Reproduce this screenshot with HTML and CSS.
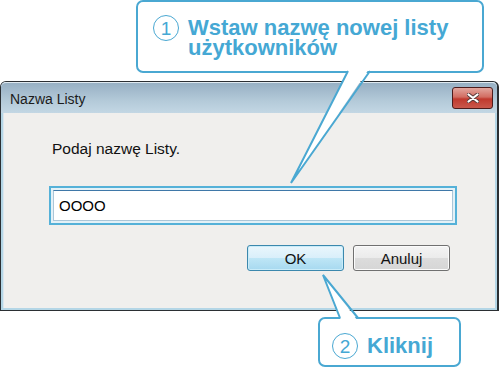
FILE: index.html
```html
<!DOCTYPE html>
<html lang="pl">
<head>
  <meta charset="UTF-8" />
  <title>Nazwa Listy</title>
  <link rel="stylesheet" href="styles.css">
</head>
<body>
  <div class="page">
    <div class="callout callout-top">
      <span class="step">1</span>
      <p class="callout-text">Wstaw nazwę nowej listy<br>użytkowników</p>
    </div>

    <div class="dialog">
      <div class="titlebar">
        <span class="title">Nazwa Listy</span>
        <div class="close-btn">
          <svg width="12" height="10" viewBox="0 0 12 10">
            <path d="M1.5 1.5 L10.5 8.5 M10.5 1.5 L1.5 8.5" stroke="#5a3a3a" stroke-width="4" stroke-linecap="round"/>
            <path d="M1.5 1.5 L10.5 8.5 M10.5 1.5 L1.5 8.5" stroke="#fff" stroke-width="2.2" stroke-linecap="round"/>
          </svg>
        </div>
      </div>
      <div class="client">
        <p class="prompt">Podaj nazwę Listy.</p>
        <div class="field-highlight">
          <div class="field">OOOO</div>
        </div>
        <div class="buttons">
          <button class="btn btn-default">OK</button>
          <button class="btn">Anuluj</button>
        </div>
      </div>
    </div>

    <div class="callout callout-bottom">
      <span class="step">2</span>
      <p class="callout-text">Kliknij</p>
    </div>

    <!-- callout pointers drawn over the dialog -->
    <svg class="tails" width="500" height="368" viewBox="0 0 500 368">
      <polygon points="349,69 369,69 291,183" fill="#fff"/>
      <polyline points="348,71 291,183 370,71" fill="none" stroke="#4aa8d2" stroke-width="2" stroke-linejoin="miter"/>
      <polygon points="341,320 357,320 323,275" fill="#fff"/>
      <polyline points="340,318 323,275 358,318" fill="none" stroke="#4aa8d2" stroke-width="2"/>
    </svg>
  </div>
</body>
</html>
```

FILE: styles.css
```css
* {
  margin: 0;
  padding: 0;
  box-sizing: border-box;
}

body {
  background: #fff;
  font-family: "Liberation Sans", Arial, sans-serif;
  width: 500px;
  height: 368px;
  overflow: hidden;
}

.page {
  position: relative;
  width: 500px;
  height: 368px;
}

/* callouts */
.callout {
  display: flex;
  align-items: flex-start;
  gap: 9px;
  background: #fff;
  border: 2px solid #4aa8d2;
  border-radius: 7px;
  color: #45a8d4;
}

.callout-top {
  margin-left: 136px;
  width: 348px;
  height: 73px;
  padding: 14px 0 0 15px;
}

.callout-bottom {
  margin: 6px 0 0 318px;
  width: 143px;
  height: 50px;
  padding: 15px 0 0 12px;
}

.step {
  width: 26px;
  height: 26px;
  border: 1.5px solid #4aa8d2;
  border-radius: 50%;
  display: flex;
  align-items: center;
  justify-content: center;
  font-size: 19px;
  line-height: 1;
  flex-shrink: 0;
}

.callout-top .step {
  margin-top: -1px;
}

.callout-bottom .step {
  margin-top: -1px;
}

.callout-text {
  font-size: 22px;
  font-weight: bold;
  line-height: 20px;
  white-space: nowrap;
}

.callout-top .callout-text {
  margin-top: 2px;
}

.callout-bottom .callout-text {
  margin-top: 2px;
}

/* dialog window */
.dialog {
  margin-top: 8px;
  width: 499px;
  height: 230px;
  border: 1px solid #2b2f33;
  border-right-width: 2px;
  border-radius: 6px 6px 0 0;
  background: #b4d6e6;
  padding: 0 2px 2px 2px;
  display: flex;
  flex-direction: column;
}

.titlebar {
  height: 31px;
  margin: 0 -2px;
  padding: 0 4px 0 9px;
  display: flex;
  align-items: center;
  justify-content: space-between;
  border-radius: 5px 5px 0 0;
  border-top: 1px solid #dfe9f0;
  background: linear-gradient(#97b0c4, #b4cad9 60%, #c3d7e4);
}

.title {
  font-size: 14px;
  color: #1b1b1b;
  padding-top: 1px;
}

.close-btn {
  width: 41px;
  height: 22px;
  border: 1px solid #4d1c1c;
  border-radius: 3px;
  background: linear-gradient(#e2a69e, #d26d62 45%, #c0392e 55%, #c9584c);
  display: flex;
  align-items: center;
  justify-content: center;
}

.client {
  flex: 1;
  background: #f0efed;
  border-left: 1px solid #dbe6ee;
  padding: 27px 0 0 45px;
  display: flex;
  flex-direction: column;
}

.prompt {
  font-size: 15.5px;
  line-height: 18px;
  color: #111;
  margin-left: 3px;
}

.field-highlight {
  margin-top: 28px;
  width: 408px;
  height: 39px;
  border: 2px solid #55b1d8;
  padding: 2px;
  background: #e4f1f7;
}

.field {
  height: 31px;
  background: #fff;
  border: 1px solid #abc6d8;
  border-top-color: #3f78a8;
  font-size: 15px;
  line-height: 29px;
  padding-left: 5px;
  color: #000;
}

.buttons {
  margin-top: 20px;
  display: flex;
  gap: 9px;
  padding-left: 198px;
}

.btn {
  width: 97px;
  height: 26px;
  font-family: "Liberation Sans", Arial, sans-serif;
  font-size: 15px;
  color: #111;
  border: 1px solid #707070;
  border-radius: 3px;
  background: linear-gradient(#f4f4f4, #ebebeb 50%, #dcdcdc 51%, #d6d6d6);
  box-shadow: inset 0 0 0 1px #fbfbfb;
}

.btn-default {
  border-color: #3c88ad;
  background: linear-gradient(#eaf6fc, #d9effa 50%, #bee6f6 51%, #a7d9f0);
  box-shadow: inset 0 0 0 1px #c9ecf9;
}

.tails {
  position: absolute;
  top: 0;
  left: 0;
  pointer-events: none;
}
```
